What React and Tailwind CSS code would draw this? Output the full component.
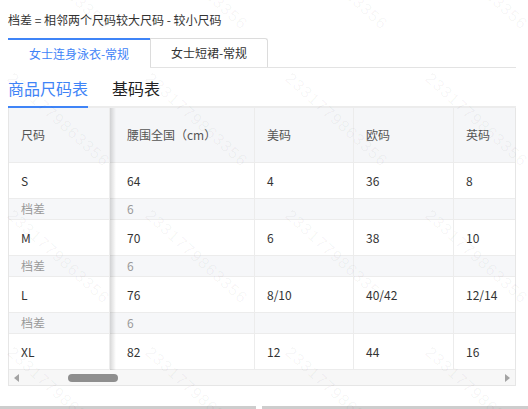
import React from 'react';

const rows = [
  { size: 'S', waist: '64', us: '4', eu: '36', uk: '8' },
  { size: 'M', waist: '70', us: '6', eu: '38', uk: '10' },
  { size: 'L', waist: '76', us: '8/10', eu: '40/42', uk: '12/14' },
  { size: 'XL', waist: '82', us: '12', eu: '44', uk: '16' },
];

const marks = [];
for (const y of [-67, 70, 207, 344]) {
  for (const x of [-125, 15, 153, 293, 433]) {
    marks.push({ x, y });
  }
}

function Cell({ w, children, className = '' }) {
  return (
    <div className={`flex h-full shrink-0 items-center border-r border-[#ececec] pl-3 ${w} ${className}`}>
      {children}
    </div>
  );
}

export default function App() {
  return (
    <div className="relative h-[409px] w-[528px] overflow-hidden bg-white font-['Noto_Sans_CJK_SC','Microsoft_YaHei',sans-serif] text-[#333]">
      <div className="px-2 pt-3">
        <p className="text-[12px] leading-4 text-[#333]">档差 = 相邻两个尺码较大尺码 - 较小尺码</p>

        {/* size-group tabs */}
        <div className="mt-[10px] flex h-[30px] w-[508px] border-b border-[#e3e3e3]">
          <div className="relative z-10 -mb-px flex h-[30px] w-[142px] items-center justify-center border-t-2 border-[#3f84f7] bg-white text-[12px] text-[#3f84f7]">
            女士连身泳衣-常规
          </div>
          <div className="flex h-[29px] w-[118px] items-center justify-center rounded-tr-[3px] border border-b-0 border-[#dcdcdc] text-[12px] text-[#333]">
            女士短裙-常规
          </div>
        </div>

        {/* chart tabs */}
        <div className="flex h-[40px] w-[508px] items-end gap-6 border-b-2 border-[#ececec]">
          <div className="-mb-[2px] border-b-2 border-[#3f84f7] pb-[6px] text-[16px] leading-6 text-[#3f84f7]">商品尺码表</div>
          <div className="-mb-[2px] border-b-2 border-transparent pb-[6px] text-[16px] leading-6 text-[#222]">基码表</div>
        </div>

        {/* table */}
        <div className="relative w-[508px] overflow-hidden border border-t-0 border-[#e6e6e6] text-[12px]">
          <div className="w-[700px]">
            <div className="flex h-[55px] border-b border-[#ececec] bg-[#f5f6f8] text-[#555]">
              <Cell w="w-[101px]">尺码</Cell>
              <Cell w="w-[145px]" className="pl-[17px]">腰围全国（cm）</Cell>
              <Cell w="w-[99px]">美码</Cell>
              <Cell w="w-[100px]">欧码</Cell>
              <Cell w="w-[100px]">英码</Cell>
            </div>
            {rows.map((r, i) => (
              <React.Fragment key={r.size}>
                <div className="flex h-[36px] border-b border-[#ececec] bg-white text-[#333]">
                  <Cell w="w-[101px]">{r.size}</Cell>
                  <Cell w="w-[145px]" className="pl-[17px]">{r.waist}</Cell>
                  <Cell w="w-[99px]">{r.us}</Cell>
                  <Cell w="w-[100px]">{r.eu}</Cell>
                  <Cell w="w-[100px]">{r.uk}</Cell>
                </div>
                {i < rows.length - 1 && (
                  <div className="flex h-[21px] border-b border-[#ececec] bg-[#f6f7f9] text-[#9a9a9a]">
                    <Cell w="w-[101px]">档差</Cell>
                    <Cell w="w-[145px]" className="pl-[17px]">6</Cell>
                    <Cell w="w-[99px]"></Cell>
                    <Cell w="w-[100px]"></Cell>
                    <Cell w="w-[100px]"></Cell>
                  </div>
                )}
              </React.Fragment>
            ))}
          </div>

          {/* scrollbar */}
          <div className="relative flex h-[15px] items-center bg-[#f7f7f7]">
            <div className="ml-[5px] h-0 w-0 border-y-[4px] border-r-[5px] border-y-transparent border-r-[#a3a3a3]" />
            <div className="ml-[49px] h-[8px] w-[50px] rounded-full bg-[#8e8e8e]" />
            <div className="ml-auto mr-[5px] h-0 w-0 border-y-[4px] border-l-[5px] border-y-transparent border-l-[#a3a3a3]" />
          </div>

          {/* fixed column shadow */}
          <div className="pointer-events-none absolute left-[101px] top-0 bottom-[15px] w-[6px] bg-gradient-to-r from-black/15 to-transparent" />
        </div>
      </div>

      {/* next block peeking in */}
      <div className="mt-[20px] flex h-[6px]">
        <div className="h-full w-[256px] bg-[#cdcdcd]" />
        <div className="ml-[6px] h-full flex-1 bg-[#cdcdcd]" />
      </div>

      {/* watermark */}
      <div className="pointer-events-none absolute inset-0">
        {marks.map((m, i) => (
          <span
            key={i}
            className="absolute origin-top-left rotate-[42deg] whitespace-nowrap font-['Liberation_Sans',sans-serif] text-[16px] leading-none tracking-[1.2px] text-black/[0.045]"
            style={{ left: m.x, top: m.y }}
          >
            2331779863356
          </span>
        ))}
      </div>
    </div>
  );
}
